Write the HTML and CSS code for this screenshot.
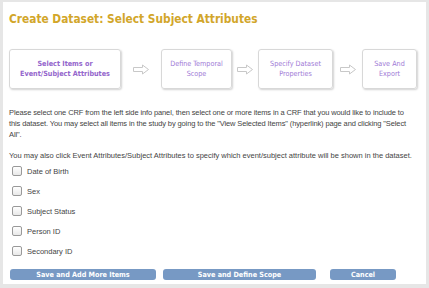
FILE: index.html
```html
<!DOCTYPE html>
<html lang="en">
<head>
    <meta charset="UTF-8">
    <title>Create Dataset: Select Subject Attributes</title>
    <link rel="stylesheet" href="styles.css">
</head>
<body>
    <div class="panel">
        <h1>Create Dataset: Select Subject Attributes</h1>

        <div class="steps">
            <div class="step step-active">Select Items or<br>Event/Subject Attributes</div>
            <span class="arrow arrow-one"><svg width="18" height="11" viewBox="0 0 18 11"><path d="M1.5 3.5H10.5V1L16.5 5.5L10.5 10V7.5H1.5Z" fill="#fff" stroke="#c8c8c8" stroke-width="1"/></svg></span>
            <div class="step step-two">Define Temporal<br>Scope</div>
            <span class="arrow arrow-two"><svg width="18" height="11" viewBox="0 0 18 11"><path d="M1.5 3.5H10.5V1L16.5 5.5L10.5 10V7.5H1.5Z" fill="#fff" stroke="#c8c8c8" stroke-width="1"/></svg></span>
            <div class="step step-three">Specify Dataset<br>Properties</div>
            <span class="arrow arrow-three"><svg width="18" height="11" viewBox="0 0 18 11"><path d="M1.5 3.5H10.5V1L16.5 5.5L10.5 10V7.5H1.5Z" fill="#fff" stroke="#c8c8c8" stroke-width="1"/></svg></span>
            <div class="step step-four">Save And<br>Export</div>
        </div>

        <p class="intro intro-first">Please select one CRF from the left side info panel, then select one or more items in a CRF that you would like to include to<br>this dataset. You may select all items in the study by going to the "View Selected Items" (hyperlink) page and clicking "Select All".</p>
        <p class="intro intro-single">You may also click Event Attributes/Subject Attributes to specify which event/subject attribute will be shown in the dataset.</p>

        <ul class="attributes">
            <li><span class="box"></span>Date of Birth</li>
            <li><span class="box"></span>Sex</li>
            <li><span class="box"></span>Subject Status</li>
            <li><span class="box"></span>Person ID</li>
            <li><span class="box"></span>Secondary ID</li>
        </ul>

        <div class="actions">
            <button class="btn btn-add">Save and Add More Items</button>
            <button class="btn btn-scope">Save and Define Scope</button>
            <button class="btn btn-cancel">Cancel</button>
        </div>
    </div>
</body>
</html>
```

FILE: styles.css
```css
body {
    margin: 0;
    background-color: #e6e6e6;
    font-family: 'Liberation Sans', Arial, sans-serif;
    width: 429px;
    height: 288px;
    overflow: hidden;
}

.panel {
    background-color: #fff;
    margin: 2px 3px 0 3px;
    height: 282px;
    padding: 0 6px;
    box-sizing: border-box;
}

h1 {
    margin: 0;
    padding-top: 9px;
    font-family: 'DejaVu Sans Condensed', 'DejaVu Sans', sans-serif;
    font-size: 11.8px;
    line-height: 16px;
    color: #d2a62a;
    font-weight: bold;
}

.steps {
    display: flex;
    align-items: center;
    margin-top: 22px;
    height: 40px;
}

.step {
    height: 40px;
    box-sizing: border-box;
    border: 1px solid #d8d8d8;
    border-radius: 3px;
    box-shadow: 1px 1px 2px rgba(0, 0, 0, 0.18);
    display: flex;
    align-items: center;
    justify-content: center;
    text-align: center;
    font-family: 'DejaVu Sans Condensed', 'DejaVu Sans', sans-serif;
    font-size: 7.2px;
    line-height: 10px;
    color: #a07ad6;
}

.step-active {
    width: 112px;
    font-weight: bold;
    color: #9466cc;
}

.step-two { width: 71px; }
.step-three { width: 75px; }
.step-four { width: 55px; }

.arrow {
    display: flex;
    justify-content: center;
}

.arrow svg {
    display: block;
}

.arrow-one { width: 40px; }
.arrow-two { width: 26px; }
.arrow-three { width: 29px; }

.intro {
    margin: 18px 0 0 0;
    font-size: 7.5px;
    line-height: 11px;
    color: #444;
}

.intro-first {
    max-width: 409px;
    letter-spacing: -0.12px;
}

.intro-single {
    margin-top: 10px;
    white-space: nowrap;
}

.attributes {
    list-style: none;
    margin: 0;
    padding: 0 0 0 3px;
}

.attributes li {
    display: flex;
    align-items: center;
    height: 20px;
    font-size: 7.5px;
    color: #444;
}

.box {
    width: 8px;
    height: 8px;
    border: 1px solid #999;
    border-radius: 2px;
    background: linear-gradient(#fff, #e8e8e8);
    margin-right: 5px;
}

.actions {
    display: flex;
    margin-top: 8px;
    padding-left: 1px;
}

.btn {
    height: 11px;
    padding: 0;
    border: none;
    border-radius: 3px;
    background-color: #7799c4;
    color: #fff;
    font-family: 'DejaVu Sans Condensed', 'DejaVu Sans', sans-serif;
    font-weight: bold;
    font-size: 7.2px;
    line-height: 11px;
}

.btn-add { width: 146px; }
.btn-scope { width: 153px; margin-left: 7px; }
.btn-cancel { width: 66px; margin-left: 14px; }
```
